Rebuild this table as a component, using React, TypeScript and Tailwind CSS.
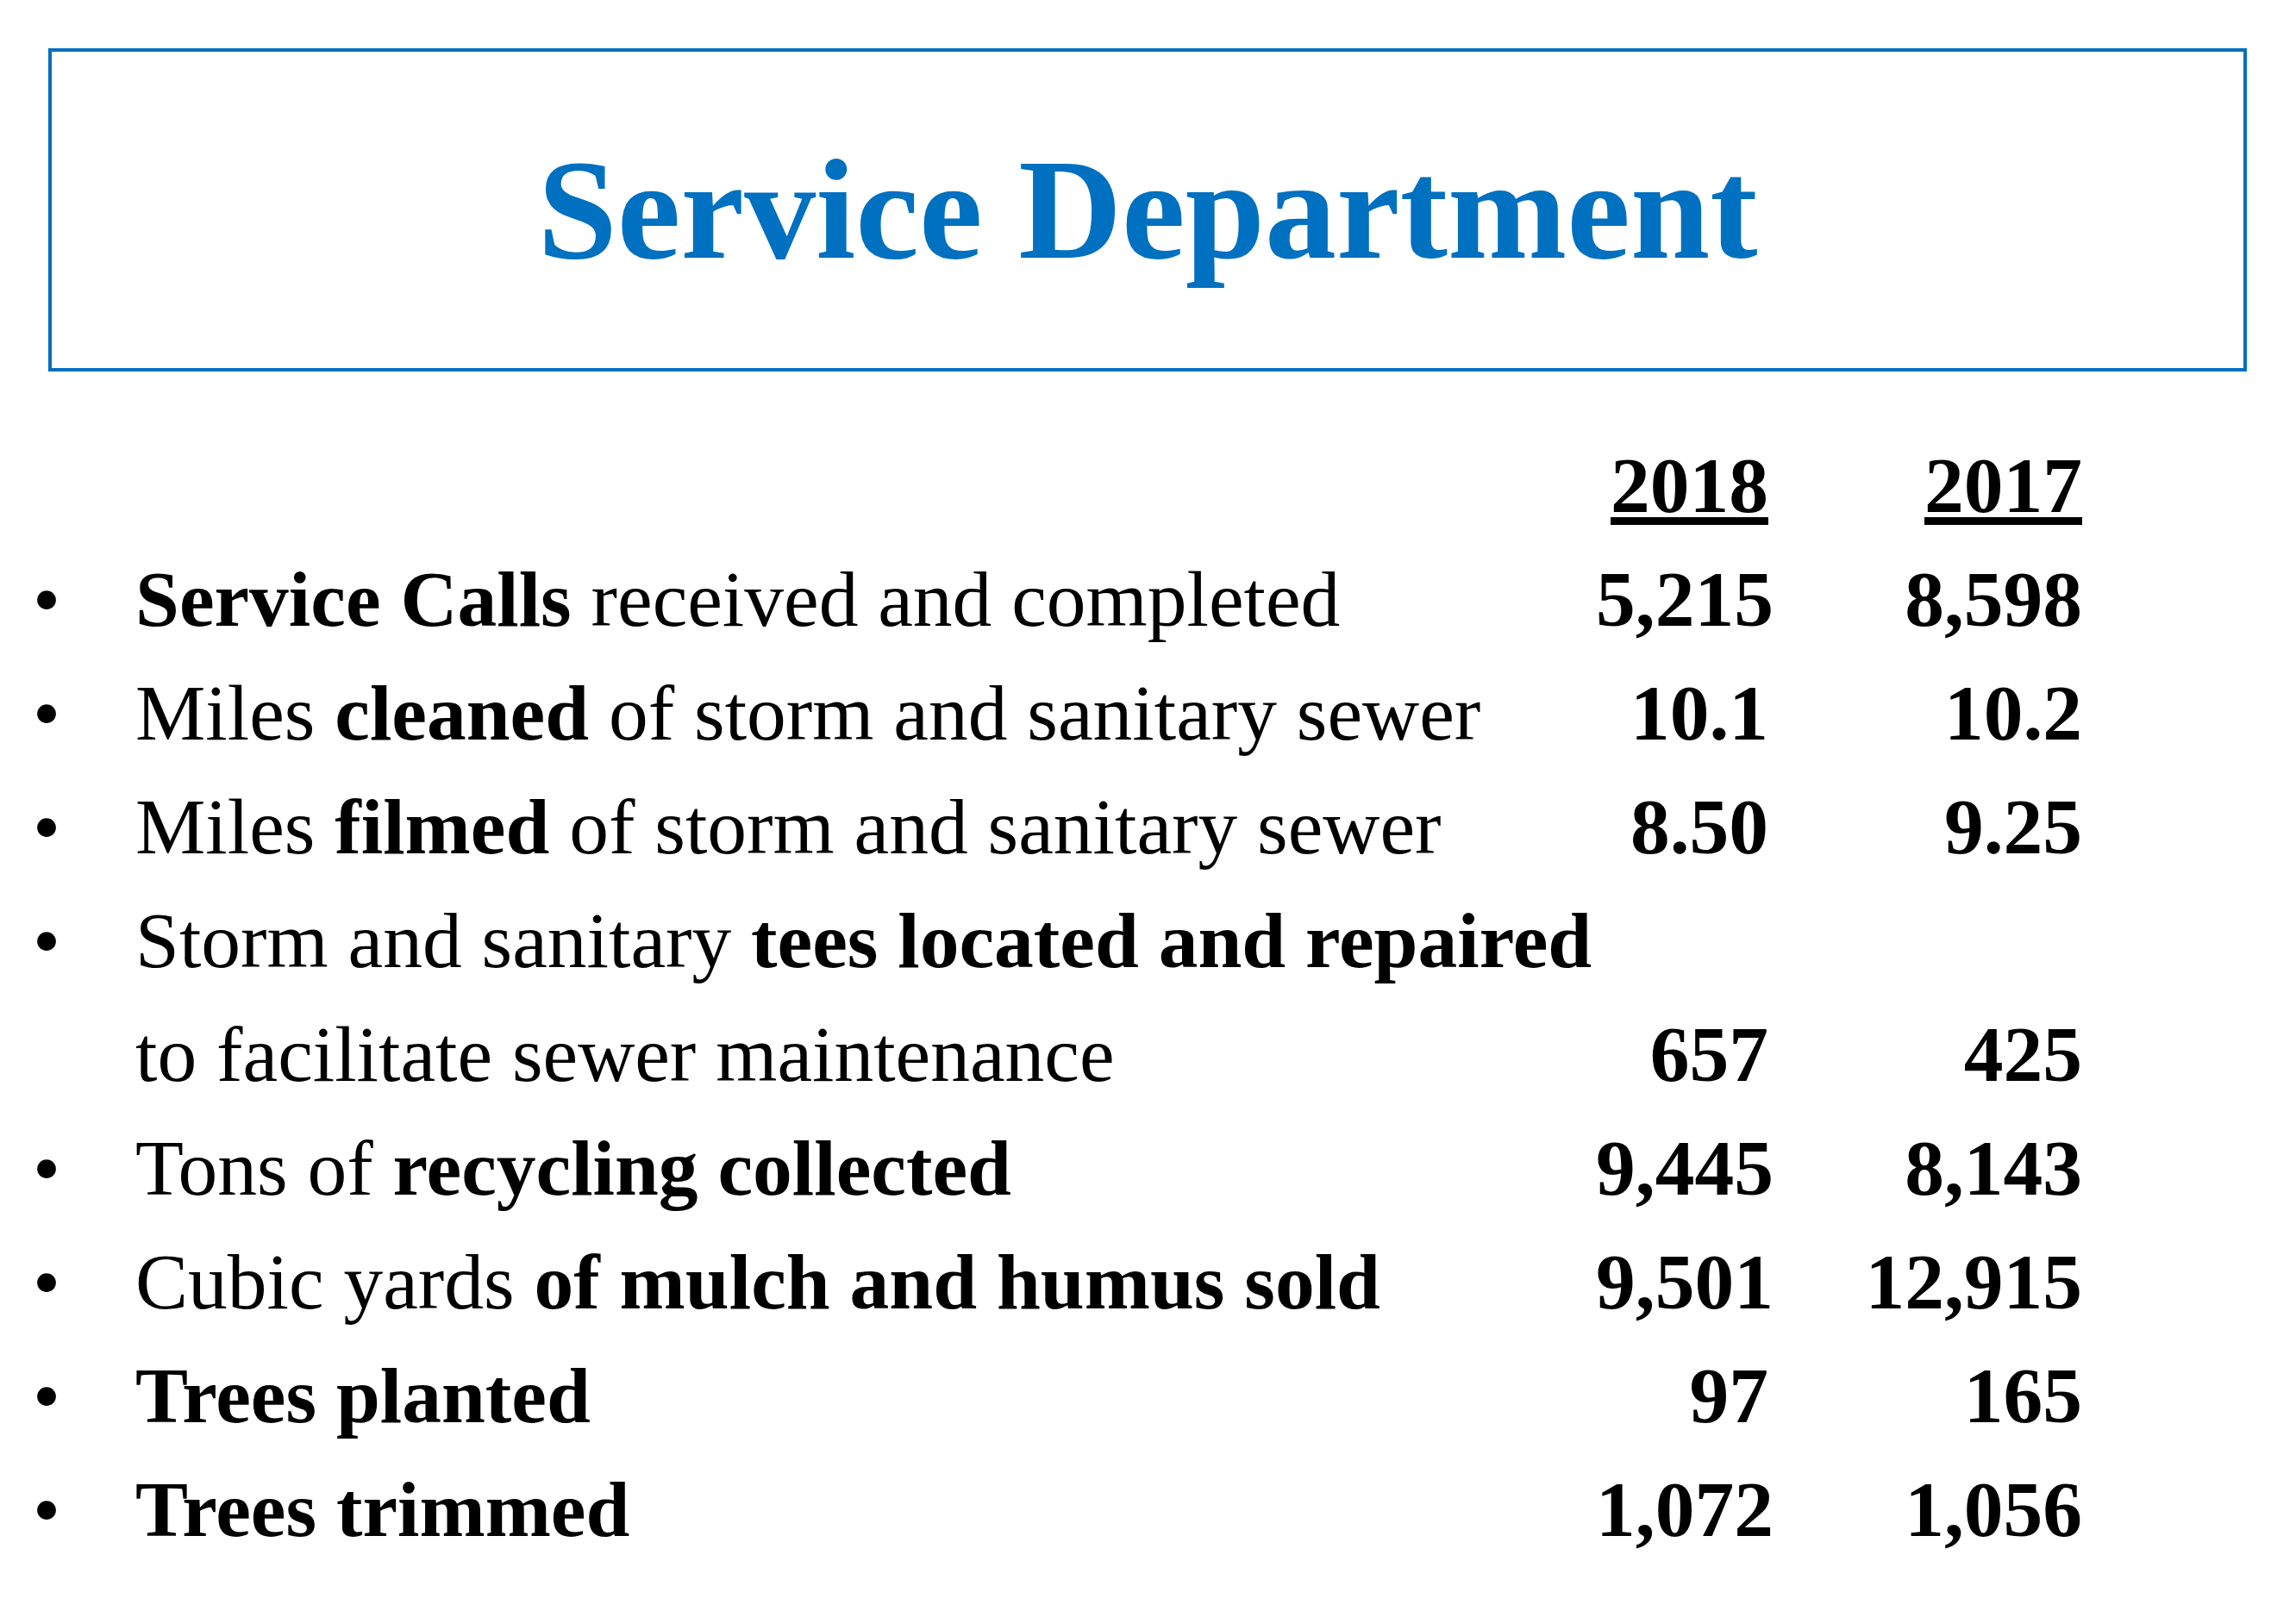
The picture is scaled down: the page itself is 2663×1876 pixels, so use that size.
const serif = { fontFamily: '"Liberation Serif", "Times New Roman", serif' };

type Row = {
  bullet: boolean;
  label: React.ReactNode;
  y2018?: string;
  y2017?: string;
};

const rows: Row[] = [
  {
    bullet: true,
    label: (
      <>
        <b>Service Calls</b> received and completed
      </>
    ),
    y2018: '5,215',
    y2017: '8,598',
  },
  {
    bullet: true,
    label: (
      <>
        Miles <b>cleaned</b> of storm and sanitary sewer
      </>
    ),
    y2018: '10.1',
    y2017: '10.2',
  },
  {
    bullet: true,
    label: (
      <>
        Miles <b>filmed</b> of storm and sanitary sewer
      </>
    ),
    y2018: '8.50',
    y2017: '9.25',
  },
  {
    bullet: true,
    label: (
      <>
        Storm and sanitary <b>tees located and repaired</b>
      </>
    ),
  },
  {
    bullet: false,
    label: <>to facilitate sewer maintenance</>,
    y2018: '657',
    y2017: '425',
  },
  {
    bullet: true,
    label: (
      <>
        Tons of <b>recycling collected</b>
      </>
    ),
    y2018: '9,445',
    y2017: '8,143',
  },
  {
    bullet: true,
    label: (
      <>
        Cubic yards <b>of mulch and humus sold</b>
      </>
    ),
    y2018: '9,501',
    y2017: '12,915',
  },
  {
    bullet: true,
    label: <b>Trees planted</b>,
    y2018: '97',
    y2017: '165',
  },
  {
    bullet: true,
    label: <b>Trees trimmed</b>,
    y2018: '1,072',
    y2017: '1,056',
  },
];

const StatRow = ({ row }: { row: Row }) => (
  <div className="flex h-[132px] items-start leading-[132px]">
    <span className="w-[119px] shrink-0">{row.bullet ? '•' : ''}</span>
    <span className="flex-1 whitespace-nowrap">{row.label}</span>
    <span className="w-[200px] shrink-0 text-right font-bold">{row.y2018}</span>
    <span className="w-[364px] shrink-0 text-right font-bold">{row.y2017}</span>
  </div>
);

export default function App() {
  return (
    <div className="min-h-screen w-full bg-white text-black" style={serif}>
      {/* Title box */}
      <div className="pl-[56px] pt-[56px]">
        <div className="h-[375px] w-[2550px] border-[4px] border-[#0070c0] pt-[100px] text-center">
          <h1 className="text-[166px] font-bold leading-none text-[#0070c0]">Service Department</h1>
        </div>
      </div>

      {/* Stats */}
      <div className="mt-[66px] w-[2415px] pl-[38px] text-[91.5px]">
        <div className="flex h-[132px] items-start leading-[132px]">
          <span className="w-[119px] shrink-0" />
          <span className="flex-1" />
          <span className="w-[200px] shrink-0 text-right font-bold">
            <span className="underline decoration-[9px] underline-offset-[6px] [text-decoration-skip-ink:none]">2018</span>
          </span>
          <span className="w-[364px] shrink-0 text-right font-bold">
            <span className="underline decoration-[9px] underline-offset-[6px] [text-decoration-skip-ink:none]">2017</span>
          </span>
        </div>
        {rows.map((row, i) => (
          <StatRow key={i} row={row} />
        ))}
      </div>
    </div>
  );
}
